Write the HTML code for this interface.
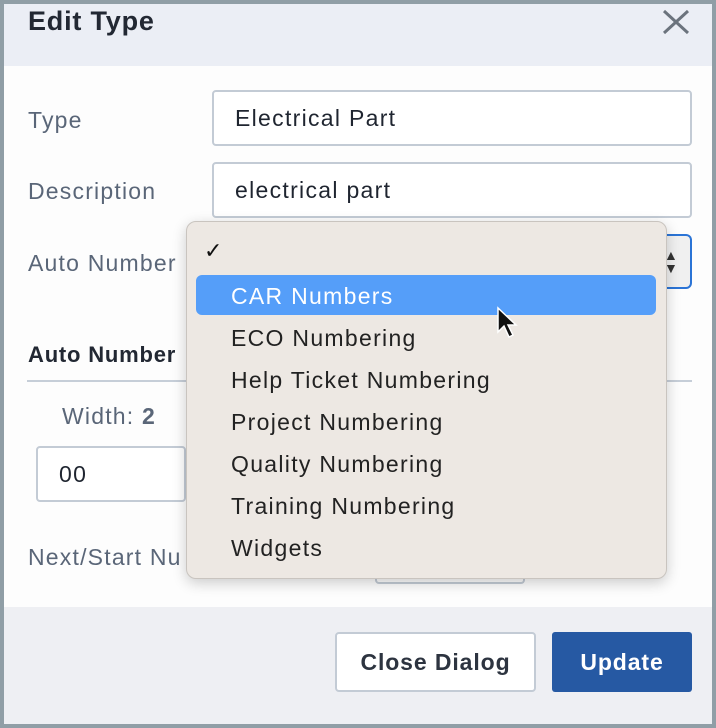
<!DOCTYPE html>
<html><head><style>
*{box-sizing:border-box;margin:0;padding:0}
body{width:716px;height:728px;background:#909ea6;font-family:"Liberation Sans",sans-serif;position:relative;overflow:hidden}
.a{position:absolute}
.lbl{position:absolute;color:#5a6678;font-size:23px;letter-spacing:1.2px}
.inp{position:absolute;background:#fff;border:2px solid #c3cbd5;border-radius:4px;font-size:23px;letter-spacing:1.3px;color:#1f2530;padding-left:21px;display:flex;align-items:center}
.opt{position:absolute;left:231px;font-size:23px;letter-spacing:1.3px;color:#222}
</style></head><body>
<div class="a" style="left:4px;top:4px;width:708px;height:62px;background:#ebeef5"></div>
<div class="a" style="left:4px;top:66px;width:708px;height:541px;background:#fdfdfd"></div>
<div class="a" style="left:4px;top:607px;width:708px;height:117px;background:#eeeff3"></div>
<div class="a" style="left:28px;top:6px;font-size:27px;letter-spacing:0.8px;font-weight:bold;color:#222833">Edit Type</div>
<svg class="a" style="left:662px;top:9px" width="28" height="26"><path d="M2 2L26 24M26 2L2 24" stroke="#6b737d" stroke-width="3"/></svg>
<div class="lbl" style="left:28px;top:107px">Type</div>
<div class="inp" style="left:212px;top:90px;width:480px;height:56px">Electrical Part</div>
<div class="lbl" style="left:28px;top:178px">Description</div>
<div class="inp" style="left:212px;top:162px;width:480px;height:56px">electrical part</div>
<div class="lbl" style="left:28px;top:250px">Auto Number</div>
<div class="a" style="left:640px;top:234px;width:52px;height:55px;border:2px solid #2b74d6;border-left:none;border-radius:0 6px 6px 0;background:#f0f0f0"></div>
<div class="a" style="left:664px;top:249px;font-size:14px;line-height:13px;color:#333">▲<br>▼</div>
<div class="a" style="left:28px;top:342px;font-size:22px;letter-spacing:0.8px;font-weight:bold;color:#222833">Auto Number</div>
<div class="a" style="left:27px;top:380px;width:665px;height:2px;background:#c6ced8"></div>
<div class="lbl" style="left:62px;top:403px">Width: <b>2</b></div>
<div class="inp" style="left:36px;top:446px;width:150px;height:56px">00</div>
<div class="lbl" style="left:28px;top:544px">Next/Start Nu</div>
<div class="a" style="left:375px;top:560px;width:150px;height:24px;border:2px solid #c3cbd5;border-top:none;border-radius:0 0 4px 4px"></div>
<div class="a" style="left:186px;top:221px;width:481px;height:358px;background:#ede8e3;border:1px solid #c9c4bf;border-radius:10px;box-shadow:0 4px 14px rgba(0,0,0,.2)"></div>
<div class="a" style="left:204px;top:238px;font-size:22px;color:#111">✓</div>
<div class="a" style="left:196px;top:275px;width:460px;height:40px;background:#559ef9;border-radius:6px"></div>
<div class="opt" style="top:283px;color:#fff">CAR Numbers</div>
<div class="opt" style="top:325px">ECO Numbering</div>
<div class="opt" style="top:367px">Help Ticket Numbering</div>
<div class="opt" style="top:409px">Project Numbering</div>
<div class="opt" style="top:451px">Quality Numbering</div>
<div class="opt" style="top:493px">Training Numbering</div>
<div class="opt" style="top:535px">Widgets</div>
<svg class="a" style="left:496px;top:306px" width="24" height="36"><path d="M2 2L2 26L8 20L13 31L17 29L12 19L20 19Z" fill="#111" stroke="#fff" stroke-width="1.5"/></svg>
<div class="a" style="left:335px;top:632px;width:201px;height:60px;background:#fff;border:2px solid #c3cbd5;border-radius:4px;font-size:23px;letter-spacing:0.9px;font-weight:bold;color:#2d3440;display:flex;align-items:center;justify-content:center">Close Dialog</div>
<div class="a" style="left:552px;top:632px;width:140px;height:60px;background:#2659a3;border-radius:3px;font-size:23px;letter-spacing:0.9px;font-weight:bold;color:#fff;display:flex;align-items:center;justify-content:center">Update</div>
</body></html>
